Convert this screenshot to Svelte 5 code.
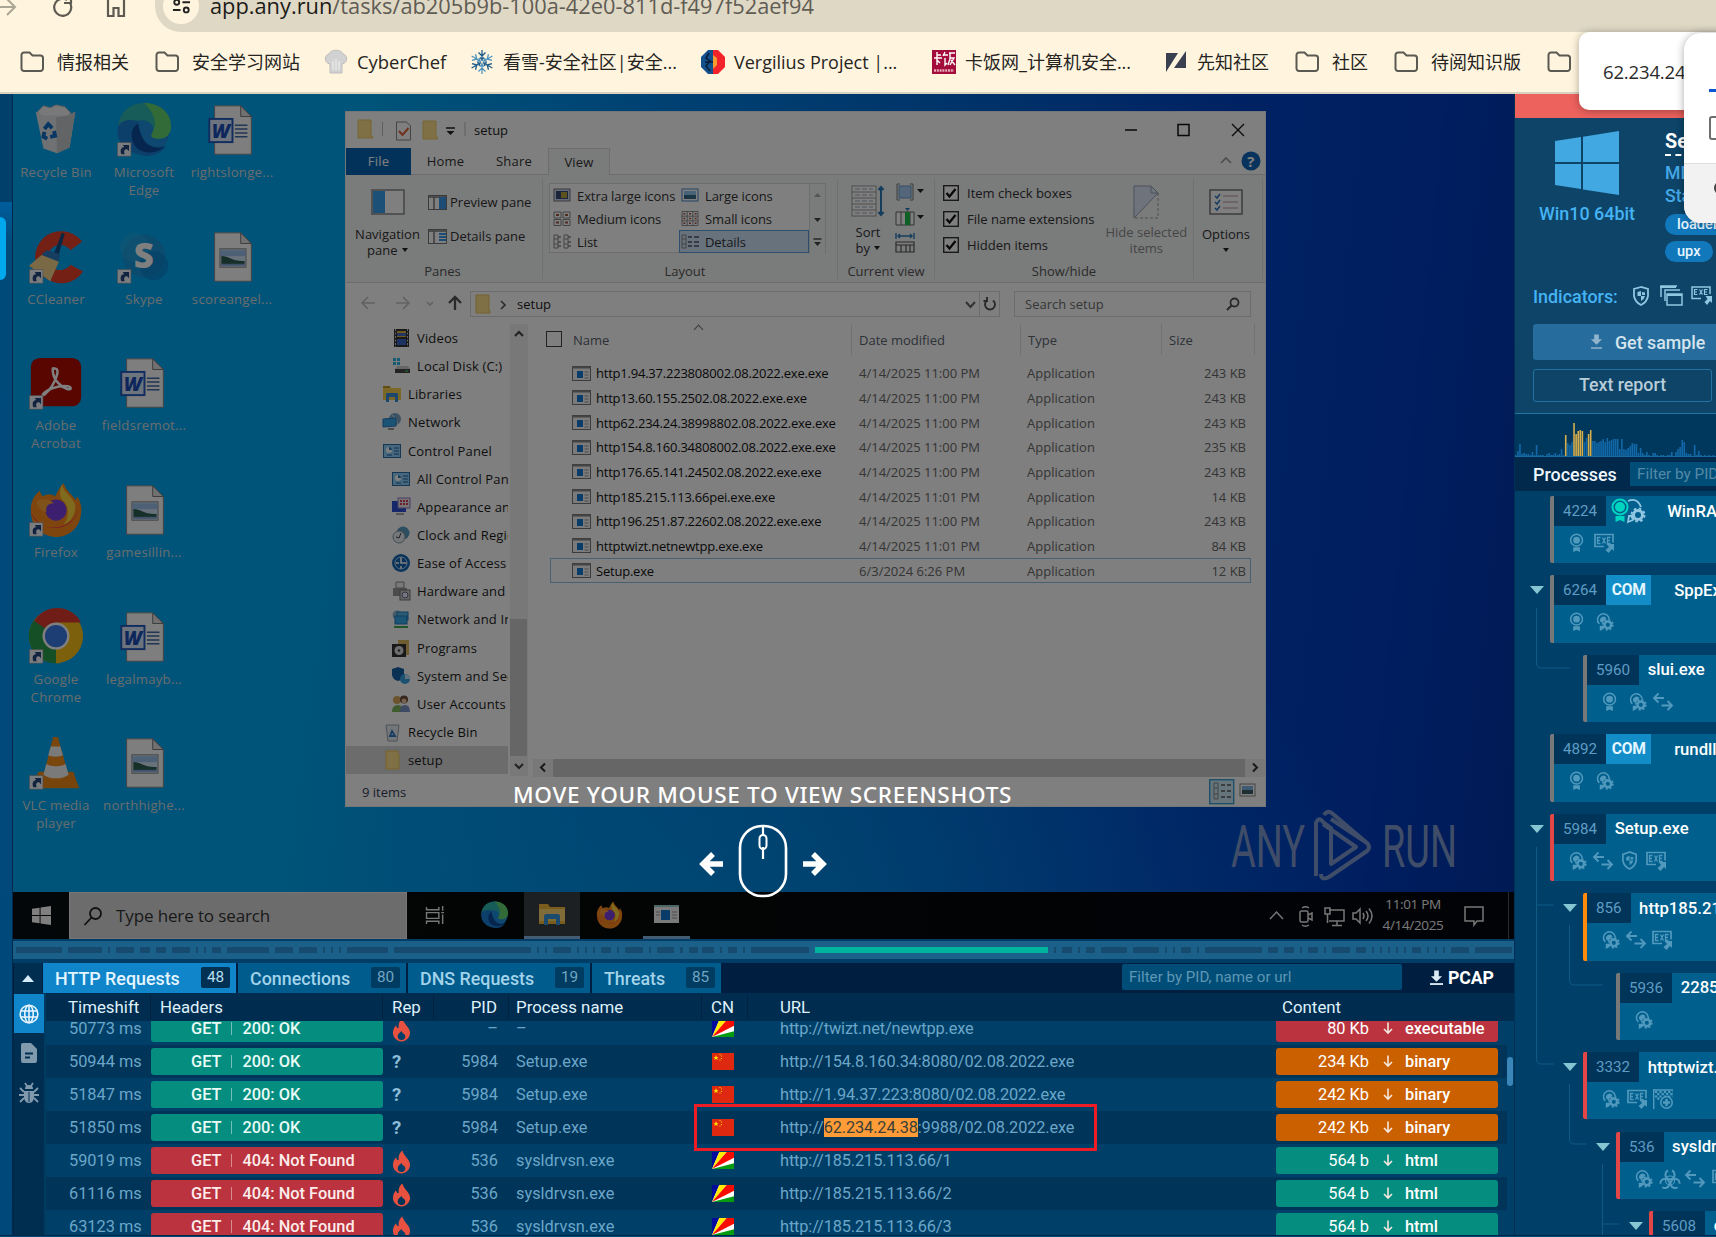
<script>
  const bookmarks = [
    { icon: 'folder', text: '情报相关', w: 135 },
    { icon: 'folder', text: '安全学习网站', w: 169 },
    { icon: 'chef', text: 'CyberChef', w: 146 },
    { icon: 'snow', text: '看雪-安全社区|安全...', w: 231 },
    { icon: 'verg', text: 'Vergilius Project |...', w: 231 },
    { icon: 'kafan', text: '卡饭网_计算机安全...', w: 232 },
    { icon: 'xz', text: '先知社区', w: 131 },
    { icon: 'folder', text: '社区', w: 99 },
    { icon: 'folder', text: '待阅知识版', w: 153 },
    { icon: 'folder', text: '', w: 40 }
  ];

  const desktop = [
    ['bin', 'Recycle Bin', 0], ['cc', 'CCleaner', 1], ['acro', 'Adobe Acrobat', 1],
    ['ff', 'Firefox', 1], ['chrome', 'Google Chrome', 1], ['vlc', 'VLC media player', 1],
    ['edge', 'Microsoft Edge', 1], ['skype', 'Skype', 1], ['word', 'fieldsremot...', 0],
    ['img', 'gamesillin...', 0], ['word', 'legalmayb...', 0], ['img', 'northhighe...', 0],
    ['word', 'rightslonge...', 0], ['img', 'scoreangel...', 0]
  ];

  const nav = [
    ['video', 'Videos', 1], ['disk', 'Local Disk (C:)', 1], ['lib', 'Libraries', 0],
    ['net', 'Network', 0], ['cpl', 'Control Panel', 0], ['cpl', 'All Control Panel Items', 1],
    ['appear', 'Appearance and', 1], ['clock', 'Clock and Region', 1], ['ease', 'Ease of Access', 1],
    ['hard', 'Hardware and', 1], ['netint', 'Network and Internet', 1], ['prog', 'Programs', 1],
    ['sec', 'System and Security', 1], ['users', 'User Accounts', 1], ['rbin', 'Recycle Bin', 0],
    ['folder', 'setup', 0]
  ];

  const files = [
    ['http1.94.37.223808002.08.2022.exe.exe', '4/14/2025 11:00 PM', '243 KB'],
    ['http13.60.155.2502.08.2022.exe.exe', '4/14/2025 11:00 PM', '243 KB'],
    ['http62.234.24.38998802.08.2022.exe.exe', '4/14/2025 11:00 PM', '243 KB'],
    ['http154.8.160.34808002.08.2022.exe.exe', '4/14/2025 11:00 PM', '235 KB'],
    ['http176.65.141.24502.08.2022.exe.exe', '4/14/2025 11:00 PM', '243 KB'],
    ['http185.215.113.66pei.exe.exe', '4/14/2025 11:01 PM', '14 KB'],
    ['http196.251.87.22602.08.2022.exe.exe', '4/14/2025 11:00 PM', '243 KB'],
    ['httptwizt.netnewtpp.exe.exe', '4/14/2025 11:01 PM', '84 KB'],
    ['Setup.exe', '6/3/2024 6:26 PM', '12 KB']
  ];

  const tabs = [
    { name: 'HTTP Requests', n: 48, w: 193 },
    { name: 'Connections', n: 80, w: 168 },
    { name: 'DNS Requests', n: 19, w: 182 },
    { name: 'Threats', n: 85, w: 129 }
  ];

  const rows = [
    { t: '50773 ms', s: '200: OK', rep: 'fire', pid: '–', p: '–', cn: 'sc', url: ['http://twizt.net/newtpp.exe'], size: '80 Kb', type: 'executable', c: 'red' },
    { t: '50944 ms', s: '200: OK', rep: '?', pid: '5984', p: 'Setup.exe', cn: 'cn', url: ['http://154.8.160.34:8080/02.08.2022.exe'], size: '234 Kb', type: 'binary', c: 'orange' },
    { t: '51847 ms', s: '200: OK', rep: '?', pid: '5984', p: 'Setup.exe', cn: 'cn', url: ['http://1.94.37.223:8080/02.08.2022.exe'], size: '242 Kb', type: 'binary', c: 'orange' },
    { t: '51850 ms', s: '200: OK', rep: '?', pid: '5984', p: 'Setup.exe', cn: 'cn', url: ['http://', '62.234.24.38', ':9988/02.08.2022.exe'], size: '242 Kb', type: 'binary', c: 'orange' },
    { t: '59019 ms', s: '404: Not Found', rep: 'fire', pid: '536', p: 'sysldrvsn.exe', cn: 'sc', url: ['http://185.215.113.66/1'], size: '564 b', type: 'html', c: 'green' },
    { t: '61116 ms', s: '404: Not Found', rep: 'fire', pid: '536', p: 'sysldrvsn.exe', cn: 'sc', url: ['http://185.215.113.66/2'], size: '564 b', type: 'html', c: 'green' },
    { t: '63123 ms', s: '404: Not Found', rep: 'fire', pid: '536', p: 'sysldrvsn.exe', cn: 'sc', url: ['http://185.215.113.66/3'], size: '564 b', type: 'html', c: 'green' }
  ];

  const procs = [
    { pid: '4224', d: 0, tone: 'grey', tag: 'cert', name: 'WinRAR.exe', ic: ['award', 'exe'] },
    { pid: '6264', d: 0, tone: 'grey', tag: 'COM', name: 'SppExtComObj.Exe', ic: ['award', 'gear'], open: 1 },
    { pid: '5960', d: 1, tone: 'grey', name: 'slui.exe', ic: ['award', 'gear', 'arrows'] },
    { pid: '4892', d: 0, tone: 'grey', tag: 'COM', name: 'rundll32.exe', ic: ['award', 'gear'] },
    { pid: '5984', d: 0, tone: 'red', name: 'Setup.exe', ic: ['gear', 'arrows', 'shield', 'exe'], open: 1, more: 1 },
    { pid: '856', d: 1, tone: 'orange', name: 'http185.215.113.66pei.exe.exe', ic: ['gear', 'arrows', 'exe'], open: 1 },
    { pid: '5936', d: 2, tone: 'grey', name: '2285418764.exe', ic: ['gear'] },
    { pid: '3332', d: 1, tone: 'red', name: 'httptwizt.netnewtpp.exe.exe', ic: ['gear', 'exe', 'flag'], open: 1 },
    { pid: '536', d: 2, tone: 'red', name: 'sysldrvsn.exe', ic: ['gear', 'bio', 'arrows', 'exe'], open: 1 },
    { pid: '5608', d: 3, tone: 'red', name: 'cmd.exe', ic: ['gear'], open: 1 }
  ];

  // Screenshot timeline: [start, end] of each segment in track pixels.
  const dashes = [
    [3, 49], [55, 89], [95, 97], [103, 121], [127, 137], [143, 153], [159, 177], [183, 185], [191, 193], [199, 208],
    [214, 256], [262, 280], [286, 304], [310, 312], [318, 320], [326, 328], [334, 375], [381, 518], [524, 526], [532, 534],
    [540, 558], [564, 566], [572, 574], [580, 582], [588, 598], [604, 606], [612, 630], [636, 638], [644, 661], [667, 670],
    [676, 685], [689, 701], [707, 709], [715, 724], [730, 732], [738, 796],
    [1041, 1043], [1049, 1059], [1065, 1067], [1073, 1082], [1088, 1114], [1120, 1146], [1152, 1154], [1160, 1162],
    [1168, 1178], [1184, 1186], [1192, 1249], [1255, 1265], [1271, 1281], [1287, 1289], [1295, 1305], [1311, 1313],
    [1319, 1337], [1343, 1353], [1359, 1361], [1367, 1369], [1375, 1377], [1383, 1385], [1391, 1393], [1399, 1408],
    [1414, 1416], [1422, 1424], [1430, 1432], [1438, 1456], [1462, 1499]
  ];

  const bars = [2, 6, 13, 3, 4, 3, 3, 2, 5, 2, 12, 2, 2, 2, 1, 3, 4, 2, 2, 4, 2, 3, 8, 2, 22, 14, 12, 15, 34, 23, 26, 27, 26, 15,
    19, 23, 27, 16, 16, 14, 15, 16, 18, 15, 19, 16, 17, 18, 18, 18, 8, 18, 8, 7, 9, 11, 14, 13, 13, 4, 9, 4, 2, 5, 2, 1, 4,
    4, 2, 1, 2, 2, 1, 2, 2, 5, 1, 5, 8, 10, 17, 15, 4, 3, 3, 1, 12, 2, 6, 2, 1, 2, 1, 2, 1, 2, 1];
  const hot = (i) => [24, 28, 29, 30, 31, 32, 35, 36].includes(i);
</script>

{#snippet bmIcon(k)}
  <svg class="bm-ic" viewBox="0 0 24 24">
    {#if k === 'folder'}
      <path d="M1.500 5a2.500 2.500 0 0 1 2.500-2.500h5.500l3 3h8A2.500 2.500 0 0 1 23 8v10.500a2.500 2.500 0 0 1-2.500 2.500H4a2.500 2.500 0 0 1-2.500-2.500z" fill="none" stroke="#5a5952" stroke-width="2" />
    {:else if k === 'chef'}
      <path d="M6 23V14C0 13 0 5 5 4 7-1 17-1 19 4c5 1 5 9-1 10v9z" fill="#d2d2d2" stroke="#bdbdbd" />
      <path d="M9 20v-9M12 20V9M15 20v-9" stroke="#e6e6e6" stroke-width="1.500" />
    {:else if k === 'snow'}
      {#each [0, 60, 120, 180, 240, 300] as a}
        <path transform="rotate({a} 12 12)" d="M12 11V0M12 6L8.500 2.500M12 6l3.500-3.500M12 9.500L10 7.500M12 9.500L14 7.500" stroke={a % 120 ? '#4f93bd' : '#1c5b8a'} stroke-width="1.300" fill="none" />
      {/each}
    {:else if k === 'verg'}
      <path d="M7 0h5v24H7L0 17V7z" fill="#14508c" /><path d="M12 0h5l7 7v10l-7 7h-5z" fill="#f3232b" />
      <path d="M12 5l4 3v7l-4 4z" fill="#f59a2c" /><path d="M8 3l-3 5 4 3-4 5 4 5M4 12h8" stroke="#0a1c38" fill="none" stroke-width="1.500" />
    {:else if k === 'kafan'}
      <rect width="24" height="24" fill="#a30d3b" />
      <path d="M2 8h8M5 2v13M5 5h4M5 10l3 3M13 2l-2 4M12 5h4M13 8v7l2-2M17 3h6M18 3v6l-2 6M18 8h4l-4 7M19 10l4 5" stroke="#fff" stroke-width="1.400" fill="none" />
      <path d="M2 20.500h20" stroke="#e6a9bb" stroke-width="2.500" stroke-dasharray="2 .8" />
    {:else}
      <path d="M2 3h12L2 22zM22 1v17H10z" fill="#39404f" />
    {/if}
  </svg>
{/snippet}

{#snippet appIcon(k)}
  {#if k === 'bin'}
    <path d="M12 16l-1-6 6-6 7 2 6-3 9 2 6 6-2 7z" fill="#f2f2f2" stroke="#bbb" />
    <path d="M9 10l8 4h25l8-4-6 37-13 6-14-5z" fill="#dfe3e6" /><path d="M30 16l12-2 8-4-6 37-13 6z" fill="#c4c9cd" />
    <path d="M18 28l4-5 4 4M28 30l1 5-5 1M21 38l-4-2 1-5" fill="none" stroke="#0f6fc4" stroke-width="4" />
  {:else if k === 'edge'}
    <circle cx="30" cy="28" r="27" fill="#1d8fe0" />
    <path d="M3 26C5 8 18 1 31 1c15 0 27 10 27 24 0 8-5 13-13 13-9 0-8-4-6-7 2-5-2-12-11-12C16 19 6 22 3 26z" fill="#2fb8b0" />
    <path d="M30 1c16 0 28 10 28 24 0 8-5 13-13 13-9 0-8-4-6-7 6-9 0-22-9-30z" fill="#7be05b" opacity=".75" />
    <path d="M3 26c3-8 14-9 22-5-9 4-9 18-1 26 7 6 19 6 28 0C46 55 34 58 24 54 9 50 1 40 3 26z" fill="#1b7fd6" />
    <path d="M24 22c-9 5-9 18-1 26 8 6 21 6 30-3-5 3-13 3-19-1-6-5-9-14-10-22z" fill="#0d4a9e" />
  {:else if k === 'cc'}
    <path d="M57 13L45 22a13 13 0 1 0 0 15l13 7A27 27 0 1 1 57 13z" fill="#e8402a" />
    <path d="M36 4l3 1-6 21-5-1z" fill="#134e84" /><path d="M20 22l14 4-1 8-18-7z" fill="#2f7cc0" />
    <path d="M15 27l18 7-9 20-22-16z" fill="#f3d28b" />
  {:else if k === 'skype'}
    <circle cx="30" cy="28" r="22" fill="#1597dc" /><circle cx="20" cy="19" r="15" fill="#2aa9e6" opacity=".5" /><circle cx="40" cy="38" r="15" fill="#0c7fcb" opacity=".6" />
    <text x="30" y="40" text-anchor="middle" font-size="36" font-weight="800" fill="#fff">S</text>
  {:else if k === 'acro'}
    <rect x="4" y="3" width="52" height="50" rx="9" fill="#b30b00" />
    <path d="M29 14c5 0 2 10-3 18s-12 12-9 8 14-8 22-8 8 5 2 3-13-9-14-16 0-5 2-5z" fill="none" stroke="#fff" stroke-width="2.600" />
  {:else if k === 'ff'}
    <path d="M4 30C3 20 9 12 13 9l3 6c5-3 10-3 13 0 3-6 5-10 9-14 2 9 10 12 12 18l2-4c3 5 5 10 4 17A26 26 0 0 1 4 30z" fill="#ff8a1c" />
    <path d="M4 30c2 10 12 18 26 17s22-12 24-20A26 26 0 0 1 4 30z" fill="#f02f5a" />
    <path d="M36 2c2 9 12 14 14 22 0 12-6 18-12 20 6-8 6-20-2-26-3-4-2-10 0-16z" fill="#ffd43a" />
    <circle cx="30" cy="29" r="11" fill="#7b3fe0" /><path d="M10 20c6-4 14-2 18 2-6 0-9 3-8 9-6-1-10-6-10-11z" fill="#ffa436" />
  {:else if k === 'chrome'}
    <circle cx="30" cy="28" r="28" fill="#fbc116" />
    <path d="M30 28L7 13A28 28 0 0 1 56 14H30z" fill="#e33b2e" /><path d="M30 28L7 12a28 28 0 0 0 26 44l11-20z" fill="#2b9e4a" /><path d="M30 28v28h4l12-20V20z" fill="#fbc116" />
    <circle cx="30" cy="28" r="14" fill="#fff" /><circle cx="30" cy="28" r="11.500" fill="#3b7ce8" />
  {:else if k === 'vlc'}
    <path d="M12 38h36l6 17H3z" fill="#ef8a17" /><path d="M27 2h5l11 40c-6 6-20 6-26 0z" fill="#f28c1a" />
    <path d="M24.500 12h10l2.500 9c-4 2-11 2-15 0zM20 30c5 3 15 3 20 0l3 11c-6 5-20 5-26 0z" fill="#f4f4f4" />
  {:else}
    <path d="M12 4h27l11 11v39H12z" fill="#fdfdfd" stroke="#8a8a8a" /><path d="M39 4v11h11z" fill="#e2e2e2" stroke="#777" />
    {#if k === 'word'}
      <path d="M33 24h13M33 28h13M33 32h13M33 36h13" stroke="#3f6aa8" stroke-width="1.500" />
      <rect x="6.500" y="17.500" width="24" height="24" fill="#dbe8fa" stroke="#2358bd" stroke-width="2" />
      <text x="18.500" y="37" text-anchor="middle" font-size="20" font-weight="900" font-style="italic" fill="#1b4fbb">W</text>
    {:else}
      <rect x="17.500" y="20.500" width="27" height="19" fill="#cfe4f7" stroke="#888" /><path d="M18 22h26v6H18z" fill="#9cc0ec" /><path d="M19 28c8 0 12 6 24 5v4H19z" fill="#2d5f50" /><path d="M19 36h24v2H19z" fill="#7fa2d8" />
    {/if}
  {/if}
{/snippet}

{#snippet navIcon(k)}
  <svg class="nav-ic" viewBox="0 0 18 18">
    {#if k === 'folder'}
      <path d="M3 0h12v3h1v15H3z" fill="#ffe28a" stroke="#e8c35a" />
    {:else if k === 'video'}
      <rect x="2" y="0" width="15" height="18" fill="#333" /><rect x="5" y="2" width="9" height="6" fill="#d9b33c" /><path d="M5 4h9v3H5z" fill="#4a6fc0" /><rect x="5" y="10" width="9" height="6" fill="#3a66c8" /><path d="M3.500 0v18M15.500 0v18" stroke="#ccc" stroke-dasharray="2 1.500" />
    {:else if k === 'disk'}
      <path d="M1 1h3v3H1zM5 1h3v3H5zM1 5h3v3H1zM5 5h3v3H5z" fill="#29b6e8" /><path d="M3 12h15v4H3z" fill="#444" /><path d="M5 9h11l2 3H3z" fill="#ccc" /><path d="M13 14h3" stroke="#4de26b" />
    {:else if k === 'lib'}
      <path d="M0 1h7l1 2h10v12H0z" fill="#f7cf4d" /><path d="M0 1h7v2H0z" fill="#c79a2a" /><path d="M3 17V9q0-1 1-1h10q1 0 1 1v8h-3v-5H6v5z" fill="#3b8ede" />
    {:else if k === 'net'}
      <circle cx="12" cy="6" r="6" fill="#7ba7c8" /><path d="M9 2q5 3 6 9" stroke="#c4dcec" fill="none" /><path d="M0 6l13-1v8L0 14z" fill="#39a9ec" stroke="#2378b8" /><path d="M5 16h6" stroke="#999" stroke-width="2" />
    {:else if k === 'netint'}
      <circle cx="5" cy="5" r="4.500" fill="#8fb9d6" /><rect x="5" y="2" width="11" height="8" fill="#57b9ec" stroke="#2378b8" /><rect x="3" y="6" width="12" height="8" fill="#39a9ec" stroke="#2378b8" /><path d="M2 17h14" stroke="#3caa52" stroke-width="2" />
    {:else if k === 'cpl'}
      <rect x=".5" y="2.500" width="17" height="13" fill="#8fd0f8" stroke="#2a6fa8" /><circle cx="6" cy="8" r="3" fill="#fff" /><path d="M6 8V5a3 3 0 0 1 3 3z" fill="#2a80c8" /><path d="M11 6h5M11 9h5M11 12h5M4 13h5" stroke="#1c5fa0" />
    {:else if k === 'appear'}
      <rect x="0" y="3" width="14" height="11" fill="#2b4fd0" /><rect x="6" y="0" width="12" height="10" fill="#f4e6e6" stroke="#8a7ad0" /><path d="M8 3h8M8 6h8" stroke="#d04060" stroke-dasharray="2 1" stroke-width="2" /><path d="M4 16h8" stroke="#aaa" stroke-width="2" />
    {:else if k === 'clock'}
      <circle cx="11" cy="7" r="6.500" fill="#5a9cbc" /><circle cx="7" cy="11" r="6" fill="#e8eef2" stroke="#8a98a0" /><path d="M9 7l-2 5-3-1" stroke="#444" fill="none" />
    {:else if k === 'ease'}
      <circle cx="9" cy="9" r="9" fill="#1467b8" /><path d="M9 3v6h6M4 9h3M9 15v-3" stroke="#fff" stroke-width="1.600" fill="none" /><circle cx="9" cy="9" r="6" fill="none" stroke="#bcd8f0" />
    {:else if k === 'hard'}
      <path d="M4 0h8v6H4z" fill="#f2f2f2" stroke="#888" /><path d="M1 6h14v8H1z" fill="#999" /><rect x="8" y="8" width="10" height="10" fill="#ccc" stroke="#777" /><circle cx="13" cy="13" r="3" fill="#eef" stroke="#668" />
    {:else if k === 'prog'}
      <path d="M6 1h11v15H6z" fill="#e0b862" /><rect x="0" y="5" width="14" height="13" fill="#333" /><circle cx="7" cy="11.500" r="4.500" fill="#ddd" /><circle cx="7" cy="11.500" r="1.300" fill="#444" />
    {:else if k === 'sec'}
      <path d="M0 2l6-2 6 2v6q-1 5-6 6-5-1-6-6z" fill="#1560a8" /><circle cx="13" cy="12" r="5" fill="#38a4e0" /><path d="M13 12V7a5 5 0 0 1 5 5z" fill="#bfe4fa" />
    {:else if k === 'users'}
      <circle cx="5" cy="5" r="4" fill="#d9a95c" /><path d="M0 17q0-7 6-7t5 7z" fill="#7cb85c" /><circle cx="12" cy="4.500" r="4" fill="#6a4a35" /><circle cx="12" cy="6" r="2.500" fill="#e5c29c" /><path d="M8 17q0-7 5-7t5 7z" fill="#7d93c8" />
    {:else}
      <path d="M3 2h13l-2 16H5z" fill="#e8eef2" stroke="#9aa4ab" /><path d="M7 13l2-5 3 5z" fill="none" stroke="#2f78c8" stroke-width="1.800" />
    {/if}
  </svg>
{/snippet}

{#snippet procIcon(k)}
  <svg class="p-ic {k}" viewBox="0 0 20 20">
    {#if k === 'award'}
      <circle cx="9" cy="7.500" r="6.200" fill="none" stroke="currentColor" stroke-width="1.600" /><circle cx="9" cy="7.500" r="3.600" fill="currentColor" /><path d="M5.500 15h7v5L9 18.500 5.500 20z" fill="currentColor" />
    {:else if k === 'gear'}
      <path d="M4.500 12.500a6.200 6.200 0 1 1 10.500-5" fill="none" stroke="currentColor" stroke-width="1.600" /><path d="M6 10.500a3.500 3.500 0 1 1 6-4l-4 5z" fill="currentColor" /><path d="M5 14.500v5.500l4-2v-3.500z" fill="currentColor" />
      <circle cx="13.500" cy="13.500" r="3.500" fill="none" stroke="currentColor" stroke-width="2.600" /><circle cx="13.500" cy="13.500" r="5.200" fill="none" stroke="currentColor" stroke-width="1.900" stroke-dasharray="2.100 1.980" />
    {:else if k === 'exe'}
      <path d="M10 13.500H1V1.500h18v8" fill="none" stroke="currentColor" stroke-width="1.700" />
      <path d="M6.500 4.500h-3v6h3M3.500 7.500h2.500M8.500 4.500l3 6M11.500 4.500l-3 6M16.500 4.500h-3v6h3M13.500 7.500H16" fill="none" stroke="currentColor" stroke-width="1.300" />
      <path d="M20 11v7l-2-2-3.500 4-3-3 3.500-3-2.500-3z" fill="currentColor" />
    {:else if k === 'arrows'}
      <path d="M11 6H1.500M5.500 1.500L1 6l4.500 4.500M8.500 13.500H18M14.500 9l4.500 4.500-4.500 4.500" fill="none" stroke="currentColor" stroke-width="1.900" />
    {:else if k === 'shield'}
      <path d="M9 1L2 3.500V10q1 6 7 9 6-3 7-9V3.500z" fill="none" stroke="currentColor" stroke-width="1.800" /><path d="M9 5v5H5.500V6.500zM9 10h4q-.5 3-4 5z" fill="currentColor" /><path d="M10 6l3 .5V9h-3z" fill="currentColor" />
    {:else if k === 'flag'}
      <path d="M.7 0v20M0 1h20" stroke="currentColor" stroke-width="1.400" />
      <path d="M2 3h18M2 7.500h18" stroke="currentColor" stroke-width="2.200" stroke-dasharray="2.200 2.200" />
      <path d="M4.200 5.200H20M4.200 9.700h5" stroke="currentColor" stroke-width="2.200" stroke-dasharray="2.200 2.200" />
      <circle cx="13.500" cy="13.500" r="5.700" fill="#005f8d" stroke="currentColor" stroke-width="1.600" /><path d="M13.500 10v7M10 13.500h7" stroke="currentColor" stroke-width="2.400" />
    {:else}
      {#each [0, 120, 240] as a}
        <path transform="rotate({a} 10 11.500)" d="M8 1.500A4.600 4.600 0 1 0 12 1.500" fill="none" stroke="currentColor" stroke-width="2" />
      {/each}
      <circle cx="10" cy="11.500" r="4.500" fill="none" stroke="currentColor" stroke-width="1.200" />
    {/if}
  </svg>
{/snippet}

{#snippet check(label)}
  <div class="chk"><svg viewBox="0 0 16 16"><rect x=".7" y=".7" width="14.600" height="14.600" fill="#fff" stroke="#333" stroke-width="1.400" /><path d="M3.500 8l3 3.500 6-7.500" fill="none" stroke="#111" stroke-width="2.300" /></svg>{label}</div>
{/snippet}

<div class="page">
  <header class="chrome">
    <div class="toolbar">
      <svg class="tool-icons" viewBox="0 0 150 32">
        <path d="M0 7h14M7 -1l8 8-8 8" fill="none" stroke="#aaa595" stroke-width="2" />
        <path d="M70 3a8.500 8.500 0 1 1-3-3M71-3v6h-7" fill="none" stroke="#5d5a52" stroke-width="2.200" />
        <path d="M108-1v17h5.500V8h5v8h5.500V-1l-8-6z" fill="none" stroke="#5d5a52" stroke-width="2.200" />
      </svg>
      <div class="omnibox">
        <span class="site"><svg viewBox="0 0 20 20"><path d="M11 3.500h8M1 11.500h8" stroke="#222" stroke-width="2.200" /><circle cx="5" cy="3.500" r="2.600" fill="none" stroke="#222" stroke-width="2" /><circle cx="15" cy="11.500" r="2.600" fill="none" stroke="#222" stroke-width="2" /></svg></span>
        <span class="url"><b>app.any.run</b>/tasks/ab205b9b-100a-42e0-811d-f497f52aef94</span>
      </div>
    </div>
    <nav class="bookmarks">
      {#each bookmarks as b}
        <a class="bm" style:width="{b.w}px">{@render bmIcon(b.icon)}<span>{b.text}</span></a>
      {/each}
    </nav>
  </header>

  <div class="app">
    <aside class="rail"><i></i></aside>

    <main class="main">
      <section class="shot">
        <div class="icons">
          {#each desktop as [k, label, link]}
            <div class="dicon">
              <svg viewBox="0 0 60 60">
                {@render appIcon(k)}
                {#if link}
                  <rect x="2.500" y="42" width="14" height="14" fill="#f4f8ff" stroke="#999" stroke-width=".6" /><path d="M6.500 54c-1.500-5 0-7 3-7.500L8 44.500h6.500V51l-2-2c-3 0-3.500 2-2.500 5z" fill="#24477e" />
                {/if}
              </svg>
              <span>{label}</span>
            </div>
          {/each}
        </div>

        <svg class="mark" viewBox="0 0 230 80">
          <g fill="#7e9bd0"><text x="0" y="60" font-size="60" textLength="74" lengthAdjust="spacingAndGlyphs">ANY</text><text x="151" y="60" font-size="60" textLength="75" lengthAdjust="spacingAndGlyphs">RUN</text></g>
          <path d="M85 69V16q3-7 7-1l8 6v36l25-17-33-23M100 12l36 24q4 4 0 8L98 70q-8 4-8-3M93 8q4-6 9-1l34 29" fill="none" stroke="#7e9bd0" stroke-width="4" stroke-linejoin="round" />
        </svg>

        <div class="win">
          <div class="title">
            <svg class="qat" viewBox="0 0 110 24">
              <path d="M2 2h13v16h1.500v2H2z" fill="#ffe28a" stroke="#eccb68" /><path d="M26.500 4v14M109 4v14" stroke="#bdbdbd" />
              <path d="M40.500 4h10l4 4v14h-14z" fill="#fff" stroke="#888" /><path d="M43 13l3.500 4 6-7" fill="none" stroke="#e0633a" stroke-width="2" />
              <path d="M67 3h13v16h1.500v2H67z" fill="#ffe28a" stroke="#eccb68" /><path d="M90 10h9" stroke="#222" stroke-width="1.500" /><path d="M90.500 13h8l-4 4z" fill="#222" />
            </svg>
            <span class="tname">setup</span>
            <svg class="wctl" viewBox="0 0 120 14"><path d="M0 7h12M107 1l12 12M119 1l-12 12" stroke="#111" stroke-width="1.300" /><rect x="53" y="1.500" width="11" height="11" fill="none" stroke="#111" stroke-width="1.500" /></svg>
          </div>
          <div class="rtabs">
            <span class="file">File</span><span class="rt home">Home</span><span class="rt share">Share</span><span class="rt view">View</span>
            <svg class="help" viewBox="0 0 42 20"><path d="M2 12l5-5 5 5" fill="none" stroke="#999" stroke-width="1.600" /><circle cx="32" cy="10" r="9.500" fill="#0f67b8" /><text x="32" y="15.500" text-anchor="middle" font-size="15" font-weight="700" fill="#fff">?</text></svg>
          </div>
          <div class="ribbon">
            <div class="grp panes">
              <div class="gbody">
                <div class="big"><svg viewBox="0 0 34 26"><rect x="1" y="1" width="32" height="24" fill="#fff" stroke="#8a8a8a" stroke-width="1.500" /><rect x="2" y="2" width="12" height="22" fill="#3aa0ee" /></svg><p>Navigation<br />pane <i class="car"></i></p></div>
                <div class="small">
                  <div><svg viewBox="0 0 19 15"><rect x=".5" y=".5" width="18" height="14" fill="#fff" stroke="#777" /><path d="M0 2h19M6 2v12" stroke="#777" stroke-width="1.500" /><rect x="11" y="2" width="7" height="12" fill="#3a9aea" /></svg>Preview pane</div>
                  <div><svg viewBox="0 0 19 15"><rect x=".5" y=".5" width="18" height="14" fill="#fff" stroke="#777" /><path d="M0 2h19M6 2v12" stroke="#777" stroke-width="1.500" /><path d="M11 5h7M11 8h7M11 11h7" stroke="#3a9aea" stroke-width="2" /></svg>Details pane</div>
                </div>
              </div>
              <b>Panes</b>
            </div>
            <div class="grp layout">
              <div class="gal">
                <div class="gl">
                  <span><svg viewBox="0 0 18 15"><rect x="1" y="1" width="16" height="12" fill="#c9d8f2" stroke="#777" /><rect x="3" y="3" width="12" height="8" fill="#3a4a7a" /><path d="M8 4h6v6H8z" fill="#b6a43a" /></svg>Extra large icons</span>
                  <span><svg viewBox="0 0 18 15"><rect x="1" y="1" width="16" height="12" fill="#fff" stroke="#4a86c8" /><path d="M3 3h12v4H3z" fill="#8fc6ee" /><path d="M3 7h12v4H3z" fill="#376a8a" /></svg>Large icons</span>
                  <span><svg viewBox="0 0 18 15"><path d="M1 1h7v6H1zM10 1h7v6h-7zM1 8.500h7v6H1zM10 8.500h7v6h-7z" fill="#fff" stroke="#888" /><path d="M3 4h3M12 4h3M3 11.500h3M12 11.500h3" stroke="#a0553a" stroke-width="2" /></svg>Medium icons</span>
                  <span><svg viewBox="0 0 18 16"><path d="M.5.5h17v15H.500zM6 0v16M12 0v16M0 5.500h18M0 10.500h18" fill="#fff" stroke="#888" /><path d="M2 3h14M2 8h14M2 13h14" stroke="#a0453a" stroke-width="1.500" stroke-dasharray="2 4" /></svg>Small icons</span>
                  <span><svg viewBox="0 0 18 15"><path d="M1 1h4v13H1zM11 1h4v13h-4zM1 5h4M1 10h4M11 5h4M11 10h4" fill="none" stroke="#888" /><path d="M5 3h3M5 8h3M5 12h3M15 3h3M15 8h3M15 12h3" stroke="#555" /></svg>List</span>
                  <span class="sel"><svg viewBox="0 0 18 15"><path d="M1 1h4v13H1zM1 5h4M1 10h4" fill="none" stroke="#888" /><path d="M7 3h4M7 8h4M7 12h4M13 3h5M13 8h5M13 12h5" stroke="#556" stroke-width="1.300" /></svg>Details</span>
                </div>
                <svg class="gs" viewBox="0 0 17 70"><path d="M.5 0v70M16.500 0v70" stroke="#dadbdc" /><path d="M5 13l3.500-4 3.500 4z" fill="#aaa" /><path d="M5 34h7l-3.500 4zM5 58h7l-3.500 4z" fill="#444" /><path d="M4.500 55h8" stroke="#444" stroke-width="1.400" /></svg>
              </div>
              <b>Layout</b>
            </div>
            <div class="grp current">
              <div class="gbody">
                <div class="big sort"><svg viewBox="0 0 34 32"><rect x="1" y="1" width="24" height="30" fill="#fff" stroke="#999" /><path d="M1 7h24M1 13h24M1 19h24M1 25h24" stroke="#999" /><path d="M4 4h18M4 10h18M4 16h18M4 22h18M4 28h18" stroke="#9ab" stroke-dasharray="5 2" /><path d="M30 3v26M27.500 5L30 2l2.500 3M27.500 27l2.500 3 2.500-3" fill="none" stroke="#2a7ab8" stroke-width="2" /></svg><p>Sort<br />by <i class="car"></i></p></div>
                <svg class="cv" viewBox="0 0 30 70"><path d="M5 1H2v16h3M15 1h3v16h-3" fill="none" stroke="#777" /><rect x="4" y="3" width="12" height="12" fill="#a8cdf2" stroke="#6a9ac8" /><path d="M22 6h7l-3.500 4zM22 32h7l-3.500 4z" fill="#222" /><path d="M1 29h18v13H1zM6 29v13M15 29v13" fill="#fff" stroke="#666" /><rect x="10" y="29" width="5" height="13" fill="#1ec04a" /><path d="M10 25h5l-2.500 3z" fill="#2a7ab8" /><path d="M1 50v6M19 50v6M3 53h14M5 51l-2 2 2 2M15 51l2 2-2 2" fill="none" stroke="#2a7ab8" stroke-width="1.400" /><path d="M1 59h18v10H1zM1 62h18M6 62v7M11 62v7M15 62v7" fill="none" stroke="#555" stroke-width="1.200" /></svg>
              </div>
              <b>Current view</b>
            </div>
            <div class="grp show">
              <div class="gbody">
                <div class="chks">{@render check('Item check boxes')}{@render check('File name extensions')}{@render check('Hidden items')}</div>
                <div class="big hide"><svg viewBox="0 0 26 34"><path d="M1 33V1h17l7 7z" fill="#dfe6f6" stroke="#98a4b8" /><path d="M25 8v25H1" fill="none" stroke="#a0a0a0" stroke-dasharray="3 2" /><path d="M18 1v7h7" fill="none" stroke="#98a4b8" /></svg><p>Hide selected<br />items</p></div>
              </div>
              <b>Show/hide</b>
            </div>
            <div class="grp opt">
              <div class="big"><svg viewBox="0 0 34 26"><rect x="1" y="1" width="32" height="24" fill="#fff" stroke="#777" stroke-width="1.500" /><path d="M6 7l2 2 3-4M6 13l2 2 3-4M6 19l2 2 3-4" fill="none" stroke="#2f78c0" stroke-width="1.500" /><path d="M14 7h15M14 13h15M14 19h15" stroke="#b99" /></svg><p>Options<br /><i class="car"></i></p></div>
            </div>
          </div>
          <div class="addr">
            <svg class="arrows" viewBox="0 0 112 24"><g fill="none" stroke-width="1.600"><path d="M4 12h13M10 6l-6 6 6 6M38 12h13M45 6l6 6-6 6M69 11l3 3 3-3" stroke="#c4c4c4" /><path d="M97 19V7M91 12l6-6 6 6" stroke="#555" stroke-width="2.300" /></g></svg>
            <div class="path"><svg viewBox="0 0 34 20"><path d="M1 1h13v16h1v2H1z" fill="#ffe28a" stroke="#e8c35a" /><path d="M26 7l4 4-4 4" fill="none" stroke="#555" stroke-width="1.600" /></svg><span>setup</span>
              <svg class="ref" viewBox="0 0 36 24"><path d="M3 10l4.500 5L12 10" fill="none" stroke="#666" stroke-width="2" /><path d="M16.500 0v24" stroke="#d9d9d9" /><path d="M30 8.500a5 5 0 1 1-6 0M24 5v4h-3.500" fill="none" stroke="#555" stroke-width="1.900" /></svg></div>
            <div class="find"><span>Search setup</span><svg viewBox="0 0 14 14"><circle cx="8.500" cy="5.500" r="4" fill="none" stroke="#555" stroke-width="1.800" /><path d="M5.500 8.500L1 13" stroke="#555" stroke-width="2.200" /></svg></div>
          </div>
          <div class="body">
            <div class="nav">
              {#each nav as [k, label, deep], i}
                <div class="nrow" class:deep class:picked={i === 15}>{@render navIcon(k)}<span>{label}</span></div>
              {/each}
            </div>
            <div class="vs"><svg viewBox="0 0 18 20"><path d="M5 12l4-4 4 4" fill="none" stroke="#444" stroke-width="2" /></svg><i></i><svg viewBox="0 0 18 20"><path d="M5 8l4 4 4-4" fill="none" stroke="#444" stroke-width="2" /></svg></div>
            <div class="list">
              <div class="lhead"><span class="cb"></span><span class="h1">Name<i class="up"></i></span><span class="h2">Date modified</span><span class="h3">Type</span><span class="h4">Size</span></div>
              <div class="frows">
                {#each files as f, i}
                  <div class="frow" class:focus={i === 8}>
                    <svg viewBox="0 0 19 15"><rect x=".5" y=".5" width="18" height="14" fill="#f6f6f6" stroke="#777" /><path d="M0 1.500h19" stroke="#888" stroke-width="2" /><rect x="5" y="5" width="6" height="7" fill="#1479d4" /><path d="M12.500 6h4M12.500 9h4M12.500 12h4" stroke="#999" /></svg>
                    <span class="fn">{f[0]}</span><span class="fd">{f[1]}</span><span class="ft">Application</span><span class="fs">{f[2]}</span>
                  </div>
                {/each}
              </div>
              <div class="hs"><svg viewBox="0 0 20 17"><path d="M12 4.500l-4 4 4 4" fill="none" stroke="#333" stroke-width="2" /></svg><i></i><svg viewBox="0 0 20 17"><path d="M8 4.500l4 4-4 4" fill="none" stroke="#333" stroke-width="2" /></svg></div>
            </div>
          </div>
          <div class="status"><span>9 items</span><svg viewBox="0 0 50 26"><rect x=".7" y=".7" width="24" height="24" fill="#cce8f6" stroke="#3b9fd0" stroke-width="1.400" /><path d="M5 4h4v16H5zM5 9h4M5 15h4" fill="none" stroke="#888" /><path d="M12 6h4M18 6h4M12 12h4M18 12h4M12 18h4M18 18h4" stroke="#555" stroke-width="1.400" /><rect x="31" y="5" width="15" height="12" fill="#fff" stroke="#888" /><path d="M33 7h11v4H33z" fill="#7fb6e8" /><path d="M33 11h11v4H33z" fill="#3d5f66" /></svg></div>
        </div>

        <div class="taskbar">
          <span class="start"><svg viewBox="0 0 20 20"><path d="M0 3l8-1.200V9.500H0zM9 1.700L20 0v9.500H9zM0 10.500h8v7.700L0 17zM9 10.500h11V20L9 18.300z" fill="#fff" /></svg></span>
          <div class="tsearch"><svg viewBox="0 0 20 20"><circle cx="12.500" cy="7.500" r="5.500" fill="none" stroke="#222" stroke-width="1.800" /><path d="M8.500 11.500L1.500 19" stroke="#222" stroke-width="1.800" /></svg>Type here to search</div>
          <svg class="tv" viewBox="0 0 20 20"><path d="M0 1v3h13V1M0 19v-3h13v3M0 7h13v6H0zM17 0v5M17 9v10M15.500 7h3" fill="none" stroke="#eee" stroke-width="1.500" /></svg>
          <svg class="tb-ic" viewBox="0 0 60 60">{@render appIcon('edge')}</svg>
          <span class="tile"><svg viewBox="0 0 26 22"><path d="M0 1h9l2 3h15v17H0z" fill="#f5b83a" /><path d="M0 6h26v12H0z" fill="#ffd970" /><path d="M5 22V13q0-2 2-2h12q2 0 2 2v9h-4v-6H9v6z" fill="#3b97e0" /></svg></span>
          <svg class="tb-ic" viewBox="0 0 60 60">{@render appIcon('ff')}</svg>
          <span class="tile plain"><svg viewBox="0 0 25 18"><rect width="25" height="18" fill="#f4f4f4" /><path d="M0 1h25" stroke="#9cc" stroke-width="2" /><rect x="7" y="5" width="9" height="10" fill="#1479d4" /><path d="M2 7h4M2 10h4M18 7h5M18 10h5M18 13h5" stroke="#999" /></svg></span>
          <svg class="tray" viewBox="0 0 108 24"><g fill="none" stroke="#eee" stroke-width="1.500"><path d="M1 15l6.500-7 6.500 7" /><rect x="31" y="7" width="8" height="11" rx="1.500" /><path d="M39 11l4-2v7l-4-2M33 4q3.500-2.500 7 0M33 21q3.500 2.500 7 0" /><path d="M60 6h15v11H60M68 17v4M63 21.500h10M56 4h5v6h-5zM58.500 10v9" /><path d="M84 9h3l4-4v14l-4-4h-3zM94 9q2 3 0 6M97 7q4 5 0 10M100 4.500q6 7.500 0 15" /></g></svg>
          <div class="clock">11:01 PM<br />4/14/2025</div>
          <svg class="note" viewBox="0 0 20 20"><path d="M1 1h18v14h-6l-3 4v-4H1z" fill="none" stroke="#eee" stroke-width="1.500" /></svg>
          <i class="edgeline"></i>
        </div>

        <div class="shade"></div>
        <div class="hint">
          <p>MOVE YOUR MOUSE TO VIEW SCREENSHOTS</p>
          <svg viewBox="0 0 130 76"><g fill="none" stroke="#fff"><rect x="42" y="3" width="46" height="70" rx="22" stroke-width="2.600" /><path d="M65 3v9M65 24v12" stroke-width="2.200" /><rect x="61.500" y="12" width="7" height="14" rx="3.500" stroke-width="2" /><path d="M25 41H7M15 31L5 41l10 10" stroke-width="5.500" /><path d="M105 41h18M115 31l10 10-10 10" stroke-width="5.500" /></g></svg>
        </div>
      </section>

      <svg class="timeline" viewBox="0 0 1501 24">
        <rect y="2" width="1501" height="18" fill="#1a6088" />
        {#each dashes as [a, b]}<rect x={a} y="8" width={b - a} height="6" fill="#164a6e" />{/each}
        <rect x="802" y="8" width="233" height="6" fill="#00b49d" />
      </svg>

      <section class="panel">
        <div class="tabbar">
          <span class="fold"></span>
          {#each tabs as t, i}
            <div class="tab" class:on={i === 0} style:width="{t.w}px"><span>{t.name}</span><em>{t.n}</em></div>
          {/each}
          <div class="filter">Filter by PID, name or url</div>
          <div class="pcap"><svg viewBox="0 0 14 16"><path d="M4.500 0h5v6H13l-6 6-6-6h3.500z" fill="#dceaf3" /><path d="M0 14.500h14" stroke="#dceaf3" stroke-width="2" /></svg>PCAP</div>
        </div>
        <div class="pbody">
          <div class="side">
            <span class="on"><svg viewBox="0 0 20 20"><g fill="none" stroke="#e9f6ff" stroke-width="1.600"><circle cx="10" cy="10" r="8.800" /><ellipse cx="10" cy="10" rx="4.200" ry="8.800" /><path d="M10 1v18M1.500 7h17M1.500 13h17" /></g></svg></span>
            <span><svg viewBox="0 0 18 20"><path d="M3 0h8l6 6v12q0 2-2 2H3q-2 0-2-2V2q0-2 2-2z" fill="#8199ac" /><path d="M5 10.500h8M5 14.500h5" stroke="#002e50" stroke-width="2" /></svg></span>
            <span><svg viewBox="0 0 20 20"><path d="M6 6q0-4 4-4t4 4zM5 8h10v7q-1 5-5 5t-5-5z" fill="#8199ac" /><path d="M6 0l2 3M14 0l-2 3M0 12h20M1 5l4 4M19 5l-4 4M1 19l4-4M19 19l-4-4" stroke="#8199ac" stroke-width="1.800" fill="none" /><path d="M10 9v10" stroke="#002e50" /></svg></span>
          </div>
          <div class="table">
            <div class="tr head">
              <span class="c-t">Timeshift</span><span class="c-h">Headers</span><span class="c-r">Rep</span><span class="c-p">PID</span><span class="c-n">Process name</span><span class="c-c">CN</span><span class="c-u">URL</span><span class="c-x">Content</span>
            </div>
            <div class="rows">
              {#each rows as r}
                <div class="tr">
                  <span class="c-t">{r.t}</span>
                  <span class="c-h"><span class="pill" class:bad={r.s[0] === '4'}><b>GET</b><i></i><b>{r.s}</b></span></span>
                  <span class="c-r">{#if r.rep === '?'}<b>?</b>{:else}<svg viewBox="0 0 20 24"><path d="M11 0c1 6 8 9 8 15 0 5-4 9-9 9s-9-4-9-9c0-4 2-6 3-8 1 2 1 3 3 3 0-4 0-7 4-10zm-1 13c-2 2-4 3-4 5.500a4 4 0 0 0 8 0C14 16 11 16 10 13z" fill="#e8503f" fill-rule="evenodd" /></svg>{/if}</span>
                  <span class="c-p">{r.pid}</span>
                  <span class="c-n">{r.p}</span>
                  <span class="c-c">
                    <svg viewBox="0 0 22 17">
                      {#if r.cn === 'cn'}
                        <rect width="22" height="17" fill="#de2910" /><path d="M4 2l.7 1.900h2L5.100 5l.6 2L4 5.900 2.300 7l.6-2L1.300 3.900h2z" fill="#ffde00" /><path d="M7.500 1.500h1M9 3h1M9 5.500h1M7.500 7h1" stroke="#ffde00" />
                      {:else}
                        <rect width="22" height="17" fill="#fff" /><path d="M0 17V0h7.300z" fill="#000a9c" /><path d="M0 17L7.300 0h7.400z" fill="#ffec00" /><path d="M0 17L14.700 0H22v5.700z" fill="#f60c00" /><path d="M0 17L22 11.300V17z" fill="#079b10" />
                      {/if}
                    </svg>
                  </span>
                  <span class="c-u">{#each r.url as u, i}{#if i === 1}<mark>{u}</mark>{:else}{u}{/if}{/each}</span>
                  <span class="c-x"><span class="dl {r.c}"><span>{r.size}</span><svg viewBox="0 0 12 12"><path d="M6 0v10M2 6.500l4 4 4-4" fill="none" stroke="#f3e6dc" stroke-width="1.600" /></svg><b>{r.type}</b></span></span>
                </div>
              {/each}
            </div>
          </div>
          <i class="thumb"></i>
          <i class="redbox"></i>
        </div>
      </section>
    </main>

    <aside class="info">
      <div class="danger"></div>
      <div class="sample">
        <div class="os"><svg viewBox="0 0 64 64"><path d="M0 10l26-4v25H0zM28 5.700L64 0v31H28zM0 33h26v25L0 54zM28 33h36v31l-36-5.500z" fill="#41a8e2" /></svg>Win10 64bit</div>
        <div class="meta"><b>Setup.exe</b><span>MD5: 2A94F3960C58C6E7</span><span>Start: 14.04.2025</span><em>loader</em><em>upx</em></div>
        <div class="ind">Indicators:
          <svg viewBox="0 0 80 22"><g fill="none" stroke="#8fc6e2" stroke-width="1.800"><path d="M9 2L2 4v7q1 6 7 9 6-3 7-9V4z" /><path d="M29 12V1h16M33 16V5h15M37 9h13v11H35V9z" stroke-width="1.500" /><path d="M69 13.500H60V2h18v7" stroke-width="1.500" /><path d="M65.500 4.500h-3v5h3M62.500 7H65M67.500 4.500l3 5M70.500 4.500l-3 5M75.500 4.500h-3v5h3M72.500 7H75" stroke-width="1.200" /></g><path d="M9 6v5H5.500V7zM9 11h4q-.5 3-4 5zM10 7l3 .5V10h-3zM35 9h15v2H35zM28 1h16v2H28zM80 11v7l-2-2-3 4-2.500-3 3-3-2-3z" fill="#8fc6e2" /></svg>
        </div>
        <div class="btn get"><svg viewBox="0 0 14 16"><path d="M4.500 0h5v5H13l-6 6-6-6h3.500z" fill="#8fb4cc" /><path d="M1 14.500h12" stroke="#8fb4cc" stroke-width="1.600" /></svg>Get sample</div>
        <div class="btn text">Text report</div>
      </div>
      <svg class="hist" viewBox="0 0 201 43">
        {#each bars as h, i}<rect x={i * 2.08} y={43 - h} width="1.600" height={h} fill={hot(i) ? '#d6ae4c' : '#1268a8'} />{/each}
        <path d="M0 42.500h201" stroke="#1a6aa4" />
      </svg>
      <div class="phead"><b>Processes</b><span>Filter by PID or name</span></div>
      <div class="tree">
        <svg class="links" viewBox="0 0 201 744"><g fill="none" stroke="#0f5b86" stroke-width="1">
          <path d="M21.500 117v55q0 5 5 5h28M21.500 356v175M21.500 414h17M21.500 530v38q0 5 5 5h12M54.500 434v55q0 5 5 5h28M54.500 593v55q0 5 5 5h12M87.500 673v71M87.500 733h17" />
        </g></svg>
        {#each procs as p}
          <div class="prow d{p.d}">
            <i class="tri" class:hid={!p.open}></i>
            <div class="proc {p.tone}">
              <div class="ptop"><span class="pid">{p.pid}</span>{#if p.tag === 'COM'}<span class="com">COM</span>{:else if p.tag}<svg class="cert" viewBox="0 0 36 26"><circle cx="9" cy="9" r="7.500" fill="none" stroke="#00d5c0" stroke-width="2" /><circle cx="9" cy="9" r="5" fill="#00d5c0" /><path d="M4.500 18h9v6L9 22l-4.500 2z" fill="#00d5c0" /><path d="M17 3q9-4 13 6M17 24l5-2v-4h-4z" fill="none" stroke="#8fc6e2" stroke-width="1.800" /><circle cx="27" cy="17" r="4.500" fill="none" stroke="#8fc6e2" stroke-width="3" /><circle cx="27" cy="17" r="6.500" fill="none" stroke="#8fc6e2" stroke-width="2" stroke-dasharray="2.600 2.500" /></svg>{/if}<b class:far={p.tag}>{p.name}</b>{#if p.more}<span class="com more"></span>{/if}</div>
              <div class="pics">{#each p.ic as k}{@render procIcon(k)}{/each}</div>
            </div>
          </div>
        {/each}
      </div>
    </aside>
  </div>
  <div class="foot"></div>

  <div class="pop one">62.234.24.38</div>
  <div class="pop two"><i class="blue"></i><i class="box"></i><div><i class="dot"></i></div></div>
</div>

<style>
  :global(body) { overflow: hidden; }
  .page { position: relative; width: 1716px; height: 1237px; overflow: hidden; background: #004068; font-family: Roboto, sans-serif; display: flex; flex-direction: column; }
  .page :global(*) { box-sizing: border-box; }
  svg { display: block; flex: none; overflow: visible; }
  p { margin: 0; }

  .chrome { height: 94px; flex: none; background: #fff5de; border-bottom: 2px solid #d8d2c1; }
  .toolbar { height: 32px; display: flex; }
  .tool-icons { width: 155px; height: 32px; padding-right: 5px; overflow: hidden; }
  .omnibox { flex: 1; display: flex; background: #dfd8c5; border-bottom-left-radius: 26px; overflow: hidden; height: 32px; }
  .site { width: 36px; height: 36px; margin: -12px 0 0 8px; border-radius: 50%; background: #fff5de; flex: none; display: flex; align-items: center; justify-content: center; }
  .site svg { width: 19px; height: 19px; margin-top: 4px; }
  .url { font: 21.800px/28px "Open Sans", sans-serif; margin: -8px 0 0 11px; color: #5f5c54; white-space: nowrap; }
  .url b { font-weight: 400; color: #1c1b18; }
  .bookmarks { display: flex; padding: 18px 0 0 20px; white-space: nowrap; overflow: hidden; }
  .bm { display: flex; align-items: center; gap: 13px; flex: none; height: 26px; font: 18px/26px "Open Sans", "Noto Sans CJK SC", sans-serif; color: #26241f; margin-top: -1px; }
  .bm-ic { width: 24px; height: 24px; }
  .bm:nth-child(n+3):nth-child(-n+7) { gap: 9px; }
  .bm:nth-child(3) { font-size: 18.400px; }

  .app { flex: 1; display: flex; min-height: 0; }
  .rail { width: 13px; flex: none; padding-top: 123px; background: linear-gradient(#00406b 0 108px, #005e9c 108px, #004a7a 150px, #00487a 100%); border-right: 1px solid #00294a; }
  .rail i { display: block; width: 6px; height: 63px; border-radius: 0 6px 6px 0; background: #00a8ee; }
  .main { width: 1502px; flex: none; display: flex; flex-direction: column; border-right: 1px solid #002f54; }

  .shot { height: 845px; flex: none; position: relative; overflow: hidden; background: radial-gradient(ellipse 700px 500px at 45% 105%, #00a4f099, transparent), linear-gradient(96deg, #00a9f4 0%, #00a8f4 22%, #0084e6 40%, #006ad4 58%, #0046c8 76%, #003cc0 90%, #0034a8 100%); font-family: "Open Sans", sans-serif; }
  .shade { position: absolute; inset: 0; background: #000; opacity: .5; }
  .icons { position: absolute; left: -1px; top: 6px; display: grid; grid-auto-flow: column; grid-template-rows: repeat(6, 126.7px); grid-auto-columns: 88px; font-size: 13.200px; line-height: 18px; letter-spacing: .25px; color: #d3dada; text-align: center; }
  .dicon { display: flex; flex-direction: column; align-items: center; gap: 3px; padding: 0 8px; margin-right: -4px; margin-left: -4px; }
  .dicon svg { width: 60px; height: 60px; padding-top: 2px; }
  .dicon:nth-child(1) { white-space: nowrap; }

  .mark { position: absolute; left: 1218px; top: 713px; width: 230px; height: 80px; font-family: Roboto, sans-serif; font-weight: 400; }

  .win { position: absolute; left: 332px; top: 17px; width: 921px; height: 696px; background: #fff; border: 1px solid #e8eef4; display: flex; flex-direction: column; font-size: 13px; color: #1c1c1c; white-space: nowrap; }
  .title { height: 36px; flex: none; display: flex; align-items: center; }
  .qat { width: 110px; height: 24px; margin-left: 10px; }
  .tname { margin-left: 8px; }
  .wctl { width: 120px; height: 14px; margin-left: auto; margin-right: 20px; }
  .rtabs { height: 27px; flex: none; display: flex; border-bottom: 1px solid #dadbdc; line-height: 27px; letter-spacing: .2px; color: #333; }
  .file { width: 65px; height: 27px; margin-left: 0; background: #0564b4; color: #fff; text-align: center; }
  .rt { text-align: center; }
  .home { width: 69px; } .share { width: 68px; }
  .view { width: 62px; background: #f5f6f7; border: 1px solid #dadbdc; border-bottom: 0; height: 28px; line-height: 26px; }
  .help { width: 42px; height: 20px; margin: 3px 4px 0 auto; }
  .ribbon { height: 108px; flex: none; background: #f5f6f7; border-bottom: 1px solid #dadbdc; display: flex; padding-top: 4px; color: #333; }
  .grp { display: flex; flex-direction: column; border-right: 1px solid #dfe0e1; height: 100px; padding-top: 4px; }
  .grp > b { font-weight: 400; text-align: center; line-height: 18px; margin-top: auto; margin-bottom: -1px; color: #555; }
  .gbody { display: flex; }
  .panes { width: 197px; } .layout { width: 295px; padding-left: 6px; } .current { width: 97px; } .show { width: 259px; } .opt { width: 69px; }
  .panes > b { padding-right: 3px; } .layout > b { padding-right: 16px; }
  .big { display: flex; flex-direction: column; align-items: center; text-align: center; line-height: 15.500px; width: 83px; padding-top: 6px; gap: 12px; }
  .big svg { width: 34px; height: 26px; }
  .panes .small { display: flex; flex-direction: column; gap: 16px; padding-top: 10px; line-height: 18px; margin-left: -1px; }
  .small div { display: flex; align-items: center; gap: 3px; }
  .small svg { width: 19px; height: 15px; }
  .car { display: inline-block; border: 3.500px solid transparent; border-top: 4px solid #222; border-bottom: 0; margin-left: 1px; vertical-align: 3px; }
  .gal { display: flex; width: 277px; height: 70px; border: 1px solid #dadbdc; border-right: 0; background: #fff; }
  .gl { display: grid; grid-template-columns: 129px 130px; grid-template-rows: repeat(3, 23px); width: 259px; }
  .gl span { display: flex; align-items: center; gap: 6px; padding-left: 3px; letter-spacing: -.08px; }
  .gl span:nth-child(2n) { padding-left: 2px; }
  .gl svg { width: 18px; height: 15px; }
  .gl .sel { background: #cfe4fa; border: 1px solid #5a9ddc; }
  .gl span.sel { padding-left: 1px; }
  .gs { width: 17px; height: 70px; background: #f5f6f7; }
  .sort { width: 56px; margin-left: 2px; padding-top: 2px; gap: 8px; } .sort svg { height: 32px; }
  .cv { width: 30px; height: 70px; margin-left: -1px; }
  .chks { padding-left: 8px; display: flex; flex-direction: column; gap: 8px; padding-top: 1px; }
  .chk { display: flex; align-items: center; gap: 8px; line-height: 18px; letter-spacing: 0; }
  .chk svg { width: 16px; height: 16px; }
  .hide { color: #8d8d8d; width: 90px; padding-top: 2px; gap: 6px; margin-left: 7px; letter-spacing: 0; } .hide svg { width: 26px; height: 34px; }
  .opt .big { width: 64px; }
  .addr { height: 34px; flex: none; display: flex; padding-top: 8px; }
  .arrows { width: 112px; height: 24px; margin-left: 12px; }
  .path { width: 530px; height: 26px; border: 1px solid #d9d9d9; display: flex; align-items: center; padding-left: 4px; gap: 8px; }
  .path > svg:first-child { width: 34px; height: 20px; }
  .ref { width: 36px; height: 24px; margin-left: auto; }
  .find { width: 237px; height: 26px; margin-left: 14px; border: 1px solid #d9d9d9; display: flex; align-items: center; justify-content: space-between; padding: 0 10px; color: #6d6d6d; }
  .find svg { width: 14px; height: 14px; }
  .body { height: 460px; flex: none; display: flex; padding-top: 7px; }
  .nav { width: 162px; height: 452px; overflow: hidden; }
  .nrow { height: 28.150px; display: flex; align-items: center; gap: 7px; padding-left: 37px; }
  .nrow.deep { padding-left: 46px; }
  .nrow.picked { background: #d9d9d9; height: 28px; }
  .nrow span { letter-spacing: .15px; }
  .nav-ic { width: 18px; height: 18px; }
  .vs { width: 18px; height: 452px; margin-left: 2px; background: #f0f0f0; display: flex; flex-direction: column; }
  .vs svg { width: 18px; height: 20px; }
  .vs i { width: 17px; height: 137px; margin-top: auto; background: #cdcdcd; }
  .list { flex: 1; display: flex; flex-direction: column; padding-left: 1px; }
  .lhead { height: 31px; display: flex; align-items: stretch; line-height: 32px; color: #5a6470; }
  .cb { width: 16px; height: 16px; border: 1.500px solid #444; margin: 7px 11px 0 17px; }
  .lhead .h1 { width: 278px; position: relative; }
  .up { position: absolute; left: 122px; top: 2px; width: 7px; height: 7px; border: solid #777; border-width: 1.500px 0 0 1.500px; transform: rotate(45deg); }
  .lhead .h2, .lhead .h3, .lhead .h4 { border-left: 1px solid #e3e3e3; padding-left: 7px; }
  .h2 { width: 169px; } .h3 { width: 141px; } .h4 { width: 94px; border-right: 1px solid #e3e3e3; }
  .frows { padding: 6px 0 0 21px; }
  .frow { width: 701px; height: 24.670px; display: flex; align-items: center; border: 1px solid transparent; padding: 0 4px 0 21px; color: #6a6a6a; }
  .frow.focus { border-color: #8fc3e8; }
  .frow svg { width: 19px; height: 15px; margin-right: 5px; }
  .fn { width: 263px; color: #111; letter-spacing: -.22px; } .fd { width: 168px; } .ft { width: 120px; } .fs { flex: 1; text-align: right; }
  .hs { height: 18px; margin-top: auto; background: #f0f0f0; display: flex; margin-left: 4px; margin-right: 0; }
  .hs svg { width: 20px; height: 17px; }
  .hs i { flex: 1; background: #cdcdcd; }
  .status { flex: 1; display: flex; align-items: center; justify-content: space-between; padding: 0 6px 0 16px; color: #333c55; }
  .status svg { width: 50px; height: 26px; }

  .taskbar { position: absolute; left: 0; right: 0; bottom: 0; height: 47px; background: linear-gradient(90deg, #060f12, #060808 40%, #05060f); display: flex; align-items: center; color: #f2f2f2; }
  .start { width: 56px; display: flex; justify-content: center; } .start svg { width: 19px; height: 19px; }
  .tsearch { width: 338px; height: 47px; background: #d9d9d9; border: 1px solid #eee; display: flex; align-items: center; gap: 13px; padding-left: 13px; font-size: 17px; color: #333; letter-spacing: -.12px; }
  .tsearch svg { width: 20px; height: 20px; }
  .tv { width: 20px; height: 19px; margin-left: 19px; }
  .tb-ic { width: 29px; height: 29px; margin-left: 34px; }
  .tile { width: 56px; height: 47px; margin: 0 0 0 15px; background: #3b4146; border-bottom: 3px solid #86b8e8; display: flex; align-items: center; justify-content: center; }
  .tile svg { width: 26px; height: 22px; }
  .tile + .tb-ic { margin-left: 15px; }
  .tile.plain { background: none; width: 47px; margin-left: 19px; } .tile.plain svg { width: 25px; height: 18px; }
  .tray { width: 108px; height: 24px; margin-left: auto; }
  .clock { width: 66px; text-align: center; font-size: 13.500px; line-height: 21px; letter-spacing: -.35px; margin-left: 3px; padding-bottom: 1px; }
  .note { width: 20px; height: 20px; margin-left: 18px; }
  .edgeline { width: 1px; height: 47px; background: #555; margin-left: 24px; margin-right: 5px; }

  .hint { position: absolute; left: 0; right: 2px; top: 685px; display: flex; flex-direction: column; align-items: center; color: #fff; }
  .hint p { font: 500 22.500px/32px "Noto Sans", sans-serif; letter-spacing: .7px; white-space: nowrap; }
  .hint svg { width: 130px; height: 76px; margin-top: 12px; }

  .timeline { width: 1501px; height: 24px; background: #003d66; }
  .panel { flex: 1; display: flex; flex-direction: column; min-height: 0; background: #001f40; }
  .tabbar { height: 30px; flex: none; display: flex; align-items: stretch; gap: 2px; }
  .fold { width: 28px; margin-left: 1px; background: #002e50; display: flex; align-items: center; justify-content: center; }
  .fold::after { content: ""; border: 6.500px solid transparent; border-bottom: 7px solid #d5ecf8; border-top: 0; }
  .tab { background: #005c8c; color: #a2d3ea; display: flex; align-items: center; justify-content: space-between; padding: 0 6px 0 12px; font-size: 17.850px; white-space: nowrap; }
  .tab.on { background: #1085c9; color: #e4f5ff; margin-left: -1px; }
  .tab span { font-weight: 500; }
  .tab em { font-style: normal; font-size: 15.300px; width: 29px; height: 21px; line-height: 21px; text-align: center; background: #003b61; color: #72a6c2; border-radius: 2px; margin-top: -1px; }
  .tab.on em { background: #003152; color: #b9def0; }
  .filter { margin-left: auto; width: 280px; height: 26px; margin-top: 1px; background: #004e78; border-radius: 2px; color: #5f96b4; font-size: 15.100px; line-height: 26px; padding-left: 7px; }
  .pcap { width: 110px; display: flex; align-items: center; gap: 5px; padding-left: 26px; font-weight: 700; font-size: 17.700px; color: #fff; letter-spacing: -.1px; }
  .pcap svg { width: 13px; height: 16px; }
  .pbody { position: relative; flex: 1; display: flex; min-height: 0; background: #004068; }
  .side { width: 33px; flex: none; background: #002e50; border-left: 1px solid #00264a; border-right: 2px solid #003c62; padding-top: 1px; }
  .side span { display: flex; align-items: center; justify-content: center; height: 40px; }
  .side .on { background: #1085c9; height: 39px; }
  .side svg { width: 20px; height: 20px; }
  .table { flex: 1; display: flex; flex-direction: column; min-width: 0; font-size: 16.350px; }
  .tr { display: flex; height: 33px; align-items: center; white-space: nowrap; color: #6ba6c9; width: 1461px; }
  .tr.head { height: 28px; flex: none; background: #002c4f; width: 1468px; color: #dff1fb; position: relative; z-index: 1; font-size: 16.850px; }
  .rows { margin-top: -9px; overflow: hidden; }
  .rows .tr:nth-child(even) { background: #003458; }
  .tr > span { flex: none; }
  .head > span { height: 24px; line-height: 24px; border-right: 1px solid #00213f; }
  .head > span.c-x, .head > span.c-u { border-right: 0; }
  .c-t { width: 105px; padding-left: 23px; } .c-h { width: 232px; } .c-r { width: 51px; padding-left: 9px; } .c-p { width: 75px; text-align: right; padding-right: 11px; }
  .c-n { width: 193px; padding-left: 7px; } .c-c { width: 46px; padding-left: 10px; } .c-u { width: 525px; padding-left: 32px; letter-spacing: -.125px; } .c-x { width: 226px; padding-left: 3px; }
  .head .c-t { padding-left: 22px; } .head .c-h { padding-left: 9px; } .head .c-x { padding-left: 9px; } .head .c-c { padding-left: 9px; }
  .c-r b { font-weight: 700; font-size: 18.500px; color: #8dbdd8; } .c-r svg { width: 19px; height: 24px; margin-top: 2px; }
  .c-c svg { width: 22px; height: 17px; }
  .pill { display: flex; align-items: center; height: 27px; border-radius: 3px; background: #058e80; color: #e8fbf6; padding-left: 40px; margin-right: 0; }
  .pill.bad { background: #ba333e; color: #fdeceb; }
  .pill b, .dl b { font-weight: 500; }
  .pill i { width: 1px; height: 13px; background: #ffffff70; margin: 0 11px 0 9px; }
  mark { background: #ff9c37; color: #3c3f3a; }
  .dl { display: flex; align-items: center; height: 27px; width: 222px; border-radius: 3px; color: #fff; }
  .dl span { width: 93px; text-align: right; } .dl svg { width: 12px; height: 13px; margin: 0 11px 0 13px; }
  .dl.red { background: #ba333e; } .dl.orange { background: #cb6000; } .dl.green { background: #058e80; }
  .thumb { position: absolute; left: 1494px; top: 64px; width: 6px; height: 29px; border-radius: 3px; background: #3a86b8; }
  .redbox { position: absolute; left: 681px; top: 111px; width: 403px; height: 47px; border: 3px solid #ee1c24; }

  .info { flex: 1; display: flex; flex-direction: column; min-width: 0; overflow: hidden; background: #004068; }
  .danger { height: 24px; flex: none; background: #ee625e; }
  .sample { height: 296px; flex: none; background: #0d4468; display: grid; grid-template-columns: 150px 1fr; grid-template-rows: 156px 42px 41px auto; border-bottom: 1px solid #2272a4; color: #4db4ee; overflow: hidden; }
  .os { display: flex; flex-direction: column; align-items: center; gap: 8px; padding: 13px 6px 0 0; font-size: 17.900px; line-height: 22px; font-weight: 500; color: #45b3f4; }
  .os svg { width: 64px; height: 64px; }
  .meta { white-space: nowrap; padding-top: 12px; font-size: 17.600px; font-weight: 500; color: #45a9e8; display: flex; flex-direction: column; align-items: flex-start; }
  .meta b { color: #fff; font-size: 19.800px; line-height: 24px; border-bottom: 2px dashed #fff; }
  .meta span { line-height: 23px; }
  .meta b + span { margin-top: 6px; }
  .meta em { font-style: normal; background: #1278bc; color: #e6f5ff; font-size: 14.600px; line-height: 20px; height: 21px; padding: 0 12px; border-radius: 11px; margin-bottom: 6px; flex: none; }
  .meta span + em { margin-top: 6px; }
  .ind { grid-column: 1 / 3; display: flex; align-items: center; gap: 14px; padding-left: 18px; font-size: 17.900px; font-weight: 500; color: #45b3f4; padding-top: 2px; }
  .ind svg { width: 80px; height: 22px; }
  .btn { grid-column: 1 / 3; margin-left: 18px; height: 36px; border-radius: 3px; display: flex; align-items: center; font-weight: 500; font-size: 17.800px; color: #d4e4ee; }
  .get { background: #266c9c; gap: 12px; padding-left: 57px; margin-top: 8px; } .get svg { width: 13px; height: 16px; }
  .text { border: 1px solid #2272a4; height: 33px; width: 179px; justify-content: center; color: #b9cdd9; margin-top: 12px; padding-bottom: 2px; }
  .hist { width: 201px; height: 43px; background: #00375c; flex: none; }
  .phead { height: 34px; flex: none; background: #00294b; display: flex; align-items: center; padding-left: 18px; color: #eef6fb; font-size: 17.900px; white-space: nowrap; }
  .phead b { font-weight: 500; width: 97px; flex: none; }
  .phead span { background: #004e78; color: #5688a5; font-size: 15.300px; height: 24px; line-height: 24px; padding-left: 7px; flex: none; width: 200px; margin-top: -1px; }
  .tree { position: relative; flex: 1; padding-top: 5px; overflow: hidden; }
  .links { position: absolute; left: 0; top: 0; width: 201px; height: 744px; }
  .prow { position: relative; display: flex; height: 79.450px; width: 400px; padding-left: 15px; }
  .d1 { padding-left: 48px; } .d2 { padding-left: 81px; } .d3 { padding-left: 114px; }
  .tri { border: 7px solid transparent; border-top: 8px solid #86c6d2; border-bottom: 0; height: 0; margin: 11px 6px 0 0; }
  .tri.hid { visibility: hidden; }
  .proc { flex: 1; height: 67.400px; background: #005f8d; border-left: 4px solid #787878; border-radius: 2px 0 0 2px; }
  .proc.red { border-color: #e24646; } .proc.orange { border-color: #ff8a0c; }
  .ptop { display: flex; height: 30px; align-items: center; white-space: nowrap; }
  .pid { background: #003459; color: #5e9cc4; font-size: 15.200px; height: 30px; line-height: 30px; padding: 0 9px; }
  .com { background: #128dc8; color: #e4f6ff; font-size: 15.600px; font-weight: 700; height: 30px; line-height: 30px; width: 45px; text-align: center; letter-spacing: -.3px; }
  .com.more { width: 40px; margin-left: 28px; flex: none; }
  .ptop b { font-weight: 500; font-size: 16.700px; color: #fff; margin-left: 8.500px; }
  .ptop .com + b.far { margin-left: 23px; }
  .ptop .cert + b.far { margin-left: 20px; }
  .cert { width: 36px; height: 26px; margin: 0 0 0 5px; }
  .pics { display: flex; gap: 8px; padding: 7px 0 0 14px; color: #5199bd; }
  .p-ic { width: 19px; height: 19px; }
  .p-ic.exe, .p-ic.flag, .p-ic.bio { width: 20px; margin-left: -1.500px; height: 20px; }
  .p-ic.arrows { margin-left: -2.500px; width: 20px; height: 20px; }

  .foot { height: 2px; flex: none; background: #004a78; border-top: 1px solid #00264a; }

  .pop { position: absolute; background: #fff; overflow: hidden; box-shadow: 0 1px 8px #00000055; }
  .one { left: 1579px; top: 32px; width: 180px; height: 78px; border-radius: 10px; font: 18.600px/80px "Open Sans", sans-serif; padding-left: 24px; color: #2b2b2b; letter-spacing: -.2px; }
  .two { left: 1684px; top: 33px; width: 100px; height: 190px; border-radius: 17px; display: flex; flex-direction: column; }
  .two .blue { width: 60px; height: 3px; background: #0b57d0; margin: 56px 0 0 25px; }
  .two .box { width: 24px; height: 24px; border: 2px solid #6e6e6e; border-radius: 3px; margin: 24px 0 0 25px; }
  .two div { margin-top: auto; height: 60px; background: #f2f2f2; border-top: 1px solid #dedede; padding: 18px 0 0 30px; }
  .dot { display: block; width: 10px; height: 12px; border-radius: 50%; border: 2px solid #444; }
</style>
